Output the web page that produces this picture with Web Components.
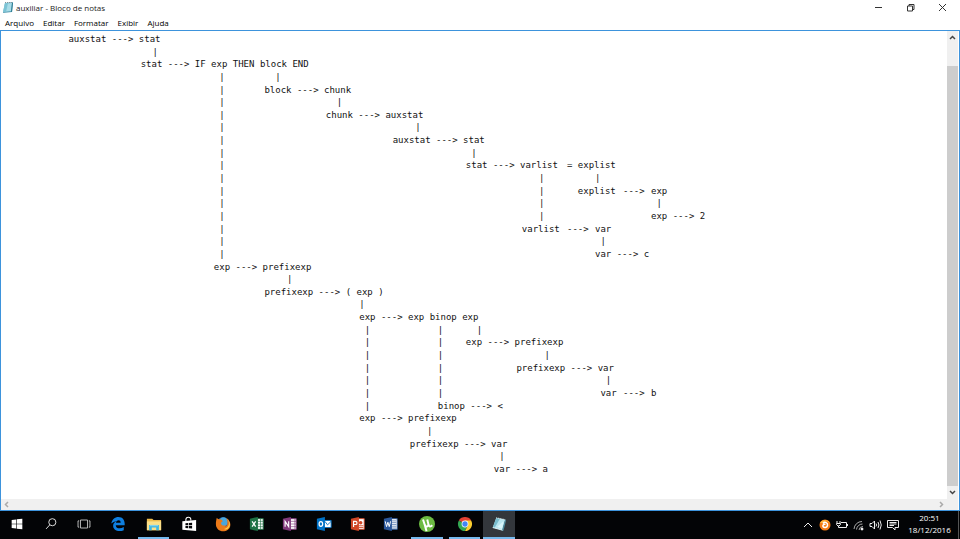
<!DOCTYPE html>
<html lang="pt-BR">
<head>
<meta charset="utf-8">
<title>auxiliar - Bloco de notas</title>
<style>
html, body { height: 100%; margin: 0; }
body { font: 8px/12px "Open Sans", "Noto Sans", sans-serif; color: #111; background: #fff; overflow: hidden; }
</style>
</head>
<body>
<desk-top></desk-top>

<script>
const reset = `
  *, *::before, *::after { box-sizing: border-box; }
  button { margin: 0; padding: 0; border: 0; background: none; color: inherit; font: inherit; display: grid; place-items: center; }
  svg { display: block; }
`;

class BaseElement extends HTMLElement {
  constructor() {
    super();
    this.attachShadow({ mode: "open" }).innerHTML = `<style>${reset}${this.constructor.css}</style>${this.constructor.html}`;
  }
}

/* Title bar with the window buttons */
class TitleBar extends BaseElement {
  static css = `
    :host { display: flex; align-items: center; height: 15px; padding: 0 2px; }
    h1 { margin: 0; font-size: 8px; font-weight: 400; flex: 1; color: #222; }
    .mark { width: 12px; margin-right: 2px; }
    button { width: 32px; height: 15px; }
  `;
  static html = `
    <svg class="mark" width="12" height="13" viewBox="0 0 12 13" aria-hidden="true">
      <path d="M3 2L11 1L10 11L1 12Z" fill="#5a9fb5"/><path d="M3 2.500L10 2L9 10L1 11Z" fill="#a8dce8"/>
      <path d="M3 2L6 2L4 11L1 11Z" fill="#7cc3d4"/><path d="M3 1.500H11" stroke="#87959a" stroke-dasharray="1 1"/>
      <path d="M10.500 2L9.500 11" stroke="#2f7f94"/>
    </svg>
    <h1><slot></slot></h1>
    <button aria-label="Minimizar"><svg width="8" height="8" viewBox="0 0 8 8"><path d="M1 3.500H8" stroke="#333"/></svg></button>
    <button aria-label="Restaurar"><svg width="9" height="9" viewBox="0 0 9 9" fill="none" stroke="#333"><path d="M1.500 3H6.500V8H1.500ZM3 3V1.500H8V6.500H6.500"/></svg></button>
    <button aria-label="Fechar"><svg width="9" height="9" viewBox="0 0 9 9"><path d="M1 1L8 8M8 1L1 8" stroke="#333"/></svg></button>
  `;
}
customElements.define("title-bar", TitleBar);

class MenuBar extends BaseElement {
  static css = `
    :host { display: flex; gap: 9px; height: 15px; padding: 0 5px; align-items: center; color: #000; }
  `;
  static html = `
    <button>Arquivo</button><button>Editar</button><button>Formatar</button><button>Exibir</button><button>Ajuda</button>
  `;
}
customElements.define("menu-bar", MenuBar);

class ScrollTrack extends BaseElement {
  static css = `
    :host { display: flex; flex-direction: column; background: #f0f0f0; color: #444; }
    :host([horizontal]) { flex-direction: row; color: #aaa; }
    button { flex: none; width: 11px; height: 13px; }
    .track { flex: 1; padding-top: 22px; display: flex; }
    .thumb { flex: 1; background: #cdcdcd; }
    :host([horizontal]) button { height: 11px; }
    :host([horizontal]) .thumb { display: none; }
    :host([horizontal]) svg { transform: rotate(-90deg); }
  `;
  static html = `
    <button aria-label="Voltar"><svg width="7" height="7" viewBox="0 0 7 7"><path d="M1 5L3.500 2.500L6 5" fill="none" stroke="currentColor" stroke-width="1.500"/></svg></button>
    <div class="track"><div class="thumb"></div></div>
    <button aria-label="Avançar"><svg width="7" height="7" viewBox="0 0 7 7"><path d="M1 2L3.500 4.500L6 2" fill="none" stroke="currentColor" stroke-width="1.500"/></svg></button>
  `;
}
customElements.define("scroll-track", ScrollTrack);

/* Each line is a list of column, text pairs */
const LINES = [
  [11, "auxstat ---> stat"],
  [26, "|"],
  [24, "stat ---> IF exp THEN block END"],
  [38, "|", 48, "|"],
  [38, "|", 46, "block ---> chunk"],
  [38, "|", 59, "|"],
  [38, "|", 57, "chunk ---> auxstat"],
  [38, "|", 73, "|"],
  [38, "|", 69, "auxstat ---> stat"],
  [38, "|", 83, "|"],
  [38, "|", 82, "stat ---> varlist = explist"],
  [38, "|", 95, "|", 105, "|"],
  [38, "|", 95, "|", 102, "explist ---> exp"],
  [38, "|", 95, "|", 116, "|"],
  [38, "|", 95, "|", 115, "exp ---> 2"],
  [38, "|", 92, "varlist ---> var"],
  [38, "|", 106, "|"],
  [38, "|", 105, "var ---> c"],
  [37, "exp ---> prefixexp"],
  [50, "|"],
  [46, "prefixexp ---> ( exp )"],
  [63, "|"],
  [63, "exp ---> exp binop exp"],
  [64, "|", 77, "|", 84, "|"],
  [64, "|", 77, "|", 82, "exp ---> prefixexp"],
  [64, "|", 77, "|", 96, "|"],
  [64, "|", 77, "|", 91, "prefixexp ---> var"],
  [64, "|", 77, "|", 107, "|"],
  [64, "|", 77, "|", 106, "var ---> b"],
  [64, "|", 77, "binop ---> <"],
  [63, "exp ---> prefixexp"],
  [75, "|"],
  [72, "prefixexp ---> var"],
  [88, "|"],
  [87, "var ---> a"],
];
const TAB = 5;

/* Pads a line out to its columns, then turns the blanks before a tab stop into a tab */
function layLine(pairs) {
  let line = "";
  for (let i = 0; i < pairs.length; i += 2) line = line.padEnd(pairs[i]) + pairs[i + 1];
  let out = "";
  for (let i = 0; i < line.length; i += TAB) {
    const cell = line.slice(i, i + TAB);
    out += cell.length === TAB ? cell.replace(/ +$/, "\t") : cell;
  }
  return out;
}

class TextDocument extends BaseElement {
  static css = `
    :host { display: block; min-width: 0; }
    .page { height: 100%; padding: 2px 6px 24px; display: flex; flex-direction: column; justify-content: space-between;
      font: 9px/12px "DejaVu Sans Mono", monospace; color: #111; outline: none; overflow: hidden; }
    .line { white-space: pre; tab-size: 28px; }
  `;
  static html = `<div class="page" role="textbox" aria-multiline="true" aria-label="Texto" contenteditable="true" spellcheck="false"></div>`;
  connectedCallback() {
    this.shadowRoot.querySelector(".page").replaceChildren(...LINES.map(pairs => {
      const line = document.createElement("div");
      line.className = "line";
      line.textContent = layLine(pairs);
      return line;
    }));
  }
}
customElements.define("text-document", TextDocument);

class NotepadWindow extends BaseElement {
  static css = `
    :host { display: flex; flex-direction: column; min-height: 0; }
    .editor { flex: 1; min-height: 0; display: grid; grid-template: minmax(0, 1fr) 11px / minmax(0, 1fr) 11px;
      border: 1px solid #3d93dc; padding-right: 1px; }
    .corner { background: #f0f0f0; }
  `;
  static html = `
    <title-bar>auxiliar - Bloco de notas</title-bar>
    <menu-bar></menu-bar>
    <div class="editor">
      <text-document></text-document>
      <scroll-track></scroll-track>
      <scroll-track horizontal></scroll-track>
      <div class="corner"></div>
    </div>
  `;
}
customElements.define("notepad-window", NotepadWindow);

const office = (color, letter, detail) => `
  <path d="M9 3H16V15H9Z" fill="#fff" stroke="${color}"/>${detail}
  <path d="M1 3L10 1V17L1 15Z" fill="${color}"/>${letter}`;

const APPS = [
  ["Iniciar", "", `<path d="M3 4.500L8 3.800V8.600H3ZM8.700 3.700L15 3V8.600H8.700ZM3 9.300H8V14.200L3 13.500ZM8.700 9.300H15V15L8.700 14.300Z" fill="#fff"/>`],
  ["Pesquisar", "", `<g fill="none" stroke="#ddd" stroke-width="1.100"><circle cx="10.500" cy="7" r="4"/><path d="M7.600 10L3.500 14.500"/></g>`],
  ["Visão de tarefas", "", `<path d="M5 4.500H13V13.500H5ZM3.500 5.500H2.300V12.500H3.500M14.500 5.500H15.700V12.500H14.500" fill="none" stroke="#ccc"/>`],
  ["Edge", "", `<path d="M1.500 8.500C2 4 5.500 1 9.500 1C14.500 1 17 4.700 16.500 10.300H6.500C6.800 14.400 11.500 14.700 15.500 12.500V16C9.500 18.500 3.500 16 3.500 11C3.500 8.500 5 7 7.400 5.900C5 6.200 3 7 1.500 8.500ZM6.700 7.500H12C12 3.900 7.700 4 6.700 7.500Z" fill="#0f7fe0"/>`],
  ["Explorador de Arquivos", "open", `<path d="M1 3H7L8.500 4.500H17V16H1Z" fill="#eebc4e"/><path d="M1 6H17V16H1Z" fill="#fbe08a"/><path d="M3.500 16V10H14.500V16H11.500V13H6.500V16Z" fill="#3eb7e6"/><path d="M4.500 10H13.500V11.500H4.500Z" fill="#83d3ee"/>`],
  ["Loja", "", `<path d="M1.500 6L17 4.500V17L1.500 15.500Z" fill="#fff"/><path d="M5.500 6V4C5.500 1 11 .500 11 3.500V5" fill="none" stroke="#fff" stroke-width="1.200"/><path d="M5 8.200L8 8V10.500H5ZM8.800 7.900L12.500 7.500V10.500H8.800ZM5 11.200H8V13.700L5 13.400ZM8.800 11.200H12.500V14.200L8.800 13.800Z" fill="#050608"/>`],
  ["Firefox", "", `<circle cx="9" cy="9" r="7.500" fill="#1f5da8"/><circle cx="9.500" cy="6.500" r="5" fill="#4aa6dc"/><path d="M2 2C3 3.500 4 3.700 5 3.700C7 3.200 8 5 9 6C7.500 6.500 6.500 7 7 9C8 11.500 11 11 12.500 10C10 13.500 14 12 14 8C14 5.500 13.500 3.500 12.500 2C18.500 5.500 18.500 12.500 14.500 15.500C9 19.500 1 16.500 1 9C1 7 1.300 5 2 2Z" fill="#ec7a18"/><path d="M13.500 3C18 7.500 15.500 14 10 14.700C16 17 19.500 8 13.500 3Z" fill="#ffd34a"/>`],
  ["Excel", "", office("#1e7145", `<path d="M3.500 6L7.500 12M7.500 6L3.500 12" stroke="#fff" stroke-width="1.400"/>`, `<path d="M10 6H16M10 9H16M10 12H16M13 3V15" stroke="#1e7145" stroke-width=".700"/>`)],
  ["OneNote", "", office("#80397b", `<path d="M3.500 12V6L7.500 12V6" fill="none" stroke="#fff" stroke-width="1.300"/>`, `<path d="M14.500 3V15M10 6H16M10 9H16M10 12H16" stroke="#80397b" stroke-width=".700"/>`)],
  ["Outlook", "", `<path d="M9 5H17V13H9Z" fill="#fff" stroke="#0072c6"/><path d="M10 6L13 10L17 6" fill="none" stroke="#0072c6"/><path d="M1 3L10 1V17L1 15Z" fill="#0072c6"/><ellipse cx="5.500" cy="9" rx="2" ry="2.700" fill="none" stroke="#fff" stroke-width="1.400"/>`],
  ["PowerPoint", "", office("#d24726", `<path d="M4 12.500V6H6C8.500 6 8.500 9.600 6 9.600H4" fill="none" stroke="#fff" stroke-width="1.300"/>`, `<circle cx="12" cy="7.500" r="2" fill="#d24726"/><path d="M10 11H15M10 13H15" stroke="#d24726"/>`)],
  ["Word", "", office("#2b579a", `<path d="M2.500 6L4 12L5.500 7L7 12L8.500 6" fill="none" stroke="#fff" stroke-width="1.100"/>`, `<path d="M10 5.500H15M10 7.500H15M10 9.500H15M10 11.500H15M10 13.500H15" stroke="#2b579a" stroke-width=".700"/>`)],
  ["µTorrent", "open", `<circle cx="9" cy="9" r="9" fill="#6cbb42"/><path d="M4.500 4L6.500 10C7.500 13 11 12 10.500 9L9.300 4M10.700 9.500C11 12.300 13 12.300 15 10.500M6.500 10L8.500 17" fill="none" stroke="#fff" stroke-width="2.200"/>`],
  ["Chrome", "open", `<path d="M9 9L2.100 5A8 8 0 0 1 15.900 5Z" fill="#e34133"/><path d="M9 9L2.100 5A8 8 0 0 0 9 17L12 11Z" fill="#33a852"/><path d="M9 9V5H15.900A8 8 0 0 1 9 17L12 11Z" fill="#fbce2f"/><circle cx="9" cy="9" r="3.800" fill="#fff"/><circle cx="9" cy="9" r="3" fill="#4285f4"/>`],
  ["Bloco de notas", "open active", `<path d="M6 2L16 4L13 16L2 13Z" fill="#b9e6f0"/><path d="M6 2L10 3L4 13.500L2 13Z" fill="#79bccd"/><path d="M16 4L17 5L14 16.500H12Z" fill="#4c8799"/><path d="M2 13L13 16" stroke="#e9fbff"/><path d="M6 2L16 4" stroke="#e8e8e8" stroke-dasharray="1 1"/><path d="M7 12L14 6L12.500 14.500Z" fill="#d9f5fa"/>`],
];

class AppButton extends HTMLElement {
  connectedCallback() {
    const [name, , art] = APPS[this.getAttribute("app")];
    this.attachShadow({ mode: "open" }).innerHTML = `<style>${reset}
      :host { display: flex; flex: 1; padding: 0 1px; }
      button { width: 100%; height: 100%; border-bottom: 2px solid transparent; }
      :host(.open) { padding: 0 3px; }
      :host(.open) button { border-color: #76b9ed; }
      :host(.active) { padding: 0; }
      :host(.active) button { background: #33373c; }
    </style><button aria-label="${name}"><svg width="16" height="16" viewBox="0 0 18 18">${art}</svg></button>`;
  }
}
customElements.define("app-button", AppButton);

class SystemTray extends BaseElement {
  static css = `
    :host { display: flex; align-items: stretch; color: #fff; }
    button { width: 17px; }
    .clock { width: 57px; padding-bottom: 2px; align-content: center; }
    .peek { width: 2px; border-left: 1px solid #555; }
  `;
  static html = `
    <button aria-label="Mostrar ícones ocultos"><svg width="10" height="10" viewBox="0 0 10 10"><path d="M1 7L5 3L9 7" fill="none" stroke="#eee"/></svg></button>
    <button aria-label="Antivírus"><svg width="12" height="12" viewBox="0 0 12 12"><circle cx="6" cy="6" r="5.500" fill="#f47b14"/><path d="M1 4C3 0 9 0 11 4C9 2 5 2 4 4Z" fill="#ffb63c"/><path d="M4 4.500C6 2 9 4 8.500 6.500C8 9 5 9 4 7.500C3.500 6 5 4.500 6.500 5.500" fill="none" stroke="#fff" stroke-width="1.500"/></svg></button>
    <button aria-label="Bateria"><svg width="12" height="12" viewBox="0 0 12 12" fill="none" stroke="#eee"><path d="M5 3.500H10.500V8.500H4M11.500 5V7M1 2V4M4 2V4M.500 4.500H4.500V5.500L3 7H2L.500 5.500ZM2.500 7V8.500H5"/></svg></button>
    <button aria-label="Rede sem fio"><svg width="11" height="11" viewBox="0 0 11 11" fill="none" stroke="#aaa"><path d="M1 9A8 8 0 0 1 9 1.500M3.500 9.500A6 6 0 0 1 9.500 4M6 10A4 4 0 0 1 10 6.500"/><circle cx="9" cy="9" r="1" fill="#fff" stroke="#fff"/></svg></button>
    <button aria-label="Volume"><svg width="13" height="12" viewBox="0 0 13 12" fill="none" stroke="#eee"><path d="M1 4.500H3L5.500 2V10L3 7.500H1ZM7 4.500Q8 6 7 7.500M9 3Q10.800 6 9 9M11 1.500Q13.500 6 11 10.500"/></svg></button>
    <button aria-label="Central de ações"><svg width="12" height="12" viewBox="0 0 12 12" fill="none" stroke="#eee"><path d="M.500 1.500H11.500V8.500H8V11L5.500 8.500H.500ZM2.500 3.500H9.500M2.500 5H9.500M2.500 6.500H7"/></svg></button>
    <button class="clock"><span>20:51</span><span>18/12/2016</span></button>
    <button class="peek" aria-label="Mostrar área de trabalho"></button>
  `;
}
customElements.define("system-tray", SystemTray);

class TaskBar extends BaseElement {
  static css = `
    :host { display: flex; justify-content: space-between; height: 28px; background: #030406; }
    nav { display: flex; flex: 0 1 515px; }
  `;
  static html = `<nav aria-label="Barra de tarefas">${APPS.map(([, state], i) => `<app-button app="${i}" class="${state}"></app-button>`).join("")}</nav><system-tray></system-tray>`;
}
customElements.define("task-bar", TaskBar);

class DeskTop extends BaseElement {
  static css = `
    :host { display: grid; grid-template-rows: minmax(0, 1fr) auto; height: 100vh; }
  `;
  static html = `<notepad-window></notepad-window><task-bar></task-bar>`;
}
customElements.define("desk-top", DeskTop);
</script>
</body>
</html>
